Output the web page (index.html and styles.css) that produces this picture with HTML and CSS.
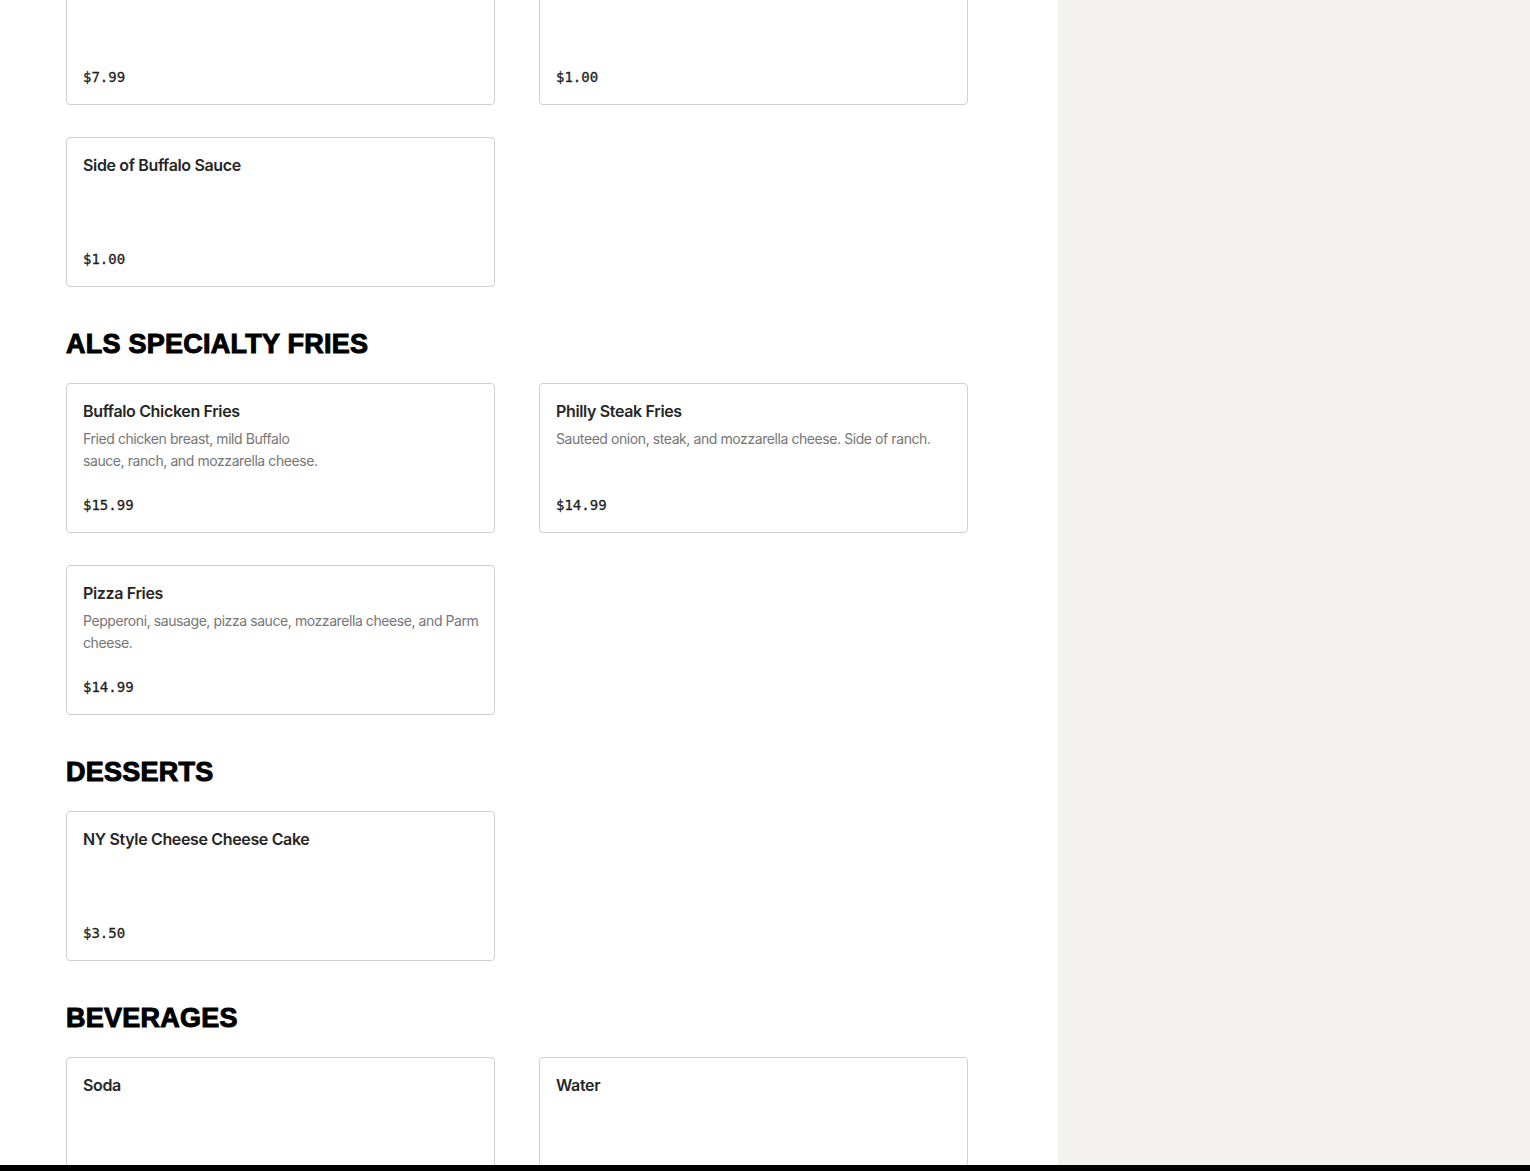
FILE: index.html
```html
<!DOCTYPE html>
<html lang="en">
<head>
<meta charset="utf-8">
<title>Menu</title>
<link rel="stylesheet" href="styles.css">
</head>
<body>
<div class="layout">
  <main class="menu">
    <section class="section section-first">
      <div class="grid">
        <article class="card">
          <h3 class="item-name">&nbsp;</h3>
          <div class="price">$7.99</div>
        </article>
        <article class="card">
          <h3 class="item-name">&nbsp;</h3>
          <div class="price">$1.00</div>
        </article>
        <article class="card">
          <h3 class="item-name">Side of Buffalo Sauce</h3>
          <div class="price">$1.00</div>
        </article>
      </div>
    </section>

    <section class="section">
      <h2 class="section-title">ALS SPECIALTY FRIES</h2>
      <div class="grid">
        <article class="card">
          <h3 class="item-name">Buffalo Chicken Fries</h3>
          <p class="item-desc">Fried chicken breast, mild Buffalo<br>sauce, ranch, and mozzarella cheese.</p>
          <div class="price">$15.99</div>
        </article>
        <article class="card">
          <h3 class="item-name">Philly Steak Fries</h3>
          <p class="item-desc">Sauteed onion, steak, and mozzarella cheese. Side of ranch.</p>
          <div class="price">$14.99</div>
        </article>
        <article class="card">
          <h3 class="item-name">Pizza Fries</h3>
          <p class="item-desc">Pepperoni, sausage, pizza sauce, mozzarella cheese, and Parm cheese.</p>
          <div class="price">$14.99</div>
        </article>
      </div>
    </section>

    <section class="section">
      <h2 class="section-title">DESSERTS</h2>
      <div class="grid">
        <article class="card">
          <h3 class="item-name">NY Style Cheese Cheese Cake</h3>
          <div class="price">$3.50</div>
        </article>
      </div>
    </section>

    <section class="section">
      <h2 class="section-title">BEVERAGES</h2>
      <div class="grid">
        <article class="card">
          <h3 class="item-name">Soda</h3>
          <div class="price">$1.00</div>
        </article>
        <article class="card">
          <h3 class="item-name">Water</h3>
          <div class="price">$1.00</div>
        </article>
      </div>
    </section>
  </main>
  <aside class="sidebar"></aside>
</div>
<div class="bottom-bar"></div>
</body>
</html>
```

FILE: styles.css
```css
html, body {
  margin: 0;
  padding: 0;
  height: 100%;
  overflow: hidden;
  background: #ffffff;
}

body {
  font-family: Inter, "Noto Sans", "Liberation Sans", sans-serif;
  color: #2a2a2a;
}

.layout {
  display: grid;
  grid-template-columns: 1058px 1fr;
  min-height: 100%;
}

.menu {
  padding: 0 90px 40px 66px;
  margin-top: -45px;
}

.sidebar {
  background: #f3f2ef;
}

.section {
  margin-top: 42px;
}

.section-first {
  margin-top: 0;
}

.section-title {
  margin: 0 0 24px 0;
  font-family: "Liberation Sans", Arial, sans-serif;
  font-weight: 900;
  font-size: 27px;
  line-height: 30px;
  letter-spacing: 0.25px;
  color: #000;
  -webkit-text-stroke: 1px #000;
}

.grid {
  display: grid;
  grid-template-columns: 429px 429px;
  column-gap: 44px;
  row-gap: 32px;
}

.card {
  box-sizing: border-box;
  height: 150px;
  border: 1px solid #cfcfcf;
  border-radius: 4px;
  padding: 15px 12px 17px 16px;
  display: flex;
  flex-direction: column;
  background: #fff;
}

.item-name {
  margin: 0;
  font-size: 16px;
  line-height: 24px;
  font-weight: 600;
  letter-spacing: -0.35px;
  color: #262626;
}

.item-desc {
  margin: 5px 0 0 0;
  font-size: 14px;
  line-height: 22px;
  letter-spacing: -0.42px;
  color: #767676;
}

.price {
  margin-top: auto;
  font-family: "DejaVu Sans Mono", "Liberation Mono", monospace;
  font-weight: 400;
  font-size: 14px;
  line-height: 20px;
  color: #1f1f1f;
  -webkit-text-stroke: 0.3px #1f1f1f;
}

.bottom-bar {
  position: fixed;
  left: 0;
  right: 0;
  bottom: 0;
  height: 6px;
  background: #000;
}
```
